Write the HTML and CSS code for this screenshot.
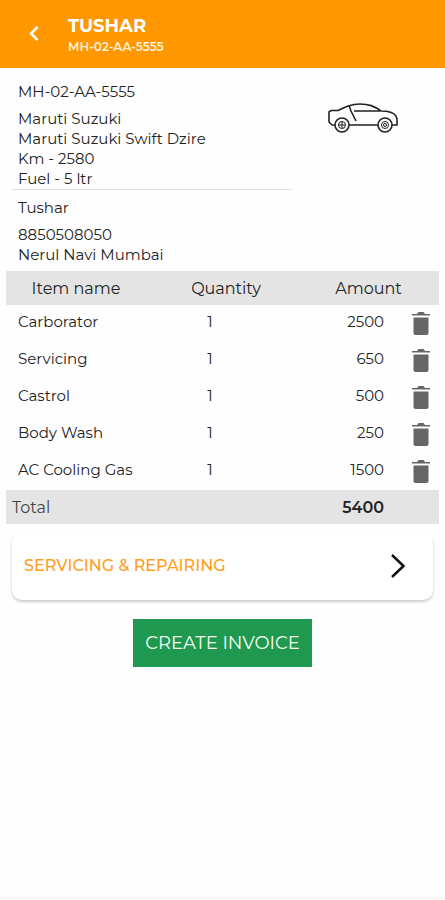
FILE: index.html
```html
<!DOCTYPE html>
<html lang="en">
<head>
<meta charset="utf-8">
<meta name="viewport" content="width=device-width, initial-scale=1">
<title>Tushar</title>
<link rel="stylesheet" href="styles.css">
</head>
<body>
<svg class="defs" aria-hidden="true">
  <symbol id="trash" viewBox="0 0 18 24">
    <path d="M0 2h5l1.500-2h5l1.500 2h5v1.500H0z"/>
    <path d="M1.500 5.500h15V21a2 2 0 0 1-2 2h-11a2 2 0 0 1-2-2z"/>
  </symbol>
</svg>
<header class="bar">
  <button class="back" aria-label="Back">
    <svg width="10" height="16" viewBox="0 0 10 16"><path d="M8.500 1L2 7.500l6.500 6.500"/></svg>
  </button>
  <div>
    <h1>TUSHAR</h1>
    <p class="plate">MH-02-AA-5555</p>
  </div>
</header>
<main>
  <section class="details">
    <div class="info">
      <div class="group vehicle">
        <p class="lead">MH-02-AA-5555</p>
        <p>Maruti Suzuki</p>
        <p>Maruti Suzuki Swift Dzire</p>
        <p>Km - 2580</p>
        <p>Fuel - 5 ltr</p>
      </div>
      <div class="group">
        <p class="lead">Tushar</p>
        <p>8850508050</p>
        <p>Nerul Navi Mumbai</p>
      </div>
    </div>
    <svg class="car" width="72" height="32" viewBox="0 0 72 32" aria-hidden="true">
      <path d="M8 22H5L2 19V9l2-1.500h7C18 4 24 1 33 1s14 2 21 7c8 0 13 2 15 5l1 3v6h-5M22 22h29"/>
      <path d="M22 2.500L24 8l5 10M27 8h26"/>
      <circle cx="15" cy="22" r="7"/><circle cx="58" cy="22" r="7"/>
      <g class="thin"><circle cx="15" cy="22" r="3.500"/><circle cx="58" cy="22" r="3.500"/>
      <path d="M15 18.500v7M11.500 22h7"/><circle cx="58" cy="22" r="1.500"/></g>
    </svg>
  </section>
  <table>
    <colgroup><col class="c-item"><col class="c-qty"><col class="c-amt"><col class="c-del"></colgroup>
    <thead>
      <tr><th>Item name</th><th>Quantity</th><th colspan="2" class="th-amt">Amount</th></tr>
    </thead>
    <tbody>
      <tr><td>Carborator</td><td class="qty">1</td><td class="amt">2500</td><td class="del"><button aria-label="Delete Carborator"><svg width="18" height="24"><use href="#trash"/></svg></button></td></tr>
      <tr><td>Servicing</td><td class="qty">1</td><td class="amt">650</td><td class="del"><button aria-label="Delete Servicing"><svg width="18" height="24"><use href="#trash"/></svg></button></td></tr>
      <tr><td>Castrol</td><td class="qty">1</td><td class="amt">500</td><td class="del"><button aria-label="Delete Castrol"><svg width="18" height="24"><use href="#trash"/></svg></button></td></tr>
      <tr><td>Body Wash</td><td class="qty">1</td><td class="amt">250</td><td class="del"><button aria-label="Delete Body Wash"><svg width="18" height="24"><use href="#trash"/></svg></button></td></tr>
      <tr><td>AC Cooling Gas</td><td class="qty">1</td><td class="amt">1500</td><td class="del"><button aria-label="Delete AC Cooling Gas"><svg width="18" height="24"><use href="#trash"/></svg></button></td></tr>
    </tbody>
    <tfoot>
      <tr><th colspan="2">Total</th><td class="amt">5400</td><td></td></tr>
    </tfoot>
  </table>
  <a class="card" href="#">
    <span>SERVICING &amp; REPAIRING</span>
    <svg width="16" height="26" viewBox="0 0 16 26" aria-hidden="true"><path d="M2 2l11.500 11L2 24"/></svg>
  </a>
  <button class="create">CREATE INVOICE</button>
</main>
</body>
</html>
```
FILE: styles.css
```css
* { box-sizing: border-box; }
body {
  margin: 0;
  min-height: 100vh;
  display: flex;
  flex-direction: column;
  background: #fefefe;
  color: #222;
  font: 15px/20px Montserrat, Inter, sans-serif;
}
body::after {
  content: "";
  height: 2px;
  margin: auto 0 1px;
  background: #f5f5f5;
}
h1, p { margin: 0; }
button { border: 0; padding: 0; font: inherit; cursor: pointer; }
svg { display: block; }
.defs { position: absolute; width: 0; height: 0; }

.bar {
  display: flex;
  align-items: center;
  gap: 24px;
  height: 68px;
  padding: 4px 24px 0;
  background: #ff9800;
  color: #fff;
}
.back { padding: 0 5px 4px; background: none; }
.back path { fill: none; stroke: #fff; stroke-width: 2.500; }
h1 { font-size: 18px; line-height: 22px; font-weight: 700; }
.plate { font-size: 12px; font-weight: 600; color: #fff0d8; }

main { display: flex; flex-direction: column; }
.details { display: flex; padding: 6px 12px; }
.info { flex: 0 1 280px; }
.group { padding: 8px 6px 0; }
.vehicle { border-bottom: 1px solid #ddd; }
.lead { margin-bottom: 7px; }
.car { margin: 29px auto 0; fill: none; stroke: #222; stroke-width: 1.600; }
.thin { stroke-width: 1; }

table { margin: 0 6px; border-collapse: collapse; table-layout: fixed; }
.c-item { width: 140px; }
.c-amt { width: 96px; }
.c-del { width: 37px; }
th, td { height: 37px; padding: 0 0 4px; font-weight: 400; }
td:first-child { padding-left: 12px; white-space: nowrap; }
thead th, tfoot th, tfoot td { height: 34px; padding-top: 2px; padding-bottom: 0; background: #e4e4e4; font-size: 16px; }
thead .th-amt { padding-right: 8px; }
tfoot th { text-align: left; padding-left: 6px; color: #444; }
.qty { text-align: center; padding-right: 32px; }
.amt { text-align: right; padding-right: 18px; }
tfoot .amt { font-weight: 600; }
.del { padding-bottom: 0; }
.del button { display: block; margin: 0 auto; background: none; }
.del svg { fill: #666; }

.card {
  display: flex;
  align-items: center;
  justify-content: space-between;
  margin: 8px 12px 0;
  height: 68px;
  padding: 0 27px 0 12px;
  border-radius: 10px;
  background: #fff;
  box-shadow: 0 2px 3px rgba(0, 0, 0, .2);
  color: #ff9d1c;
  font-size: 16px;
  font-weight: 500;
  text-decoration: none;
}
.card path { fill: none; stroke: #111; stroke-width: 2.500; }
.create {
  align-self: center;
  margin-top: 19px;
  padding: 14px 12px;
  background: #1f9850;
  color: #f4fff4;
  font-size: 18px;
}
```
